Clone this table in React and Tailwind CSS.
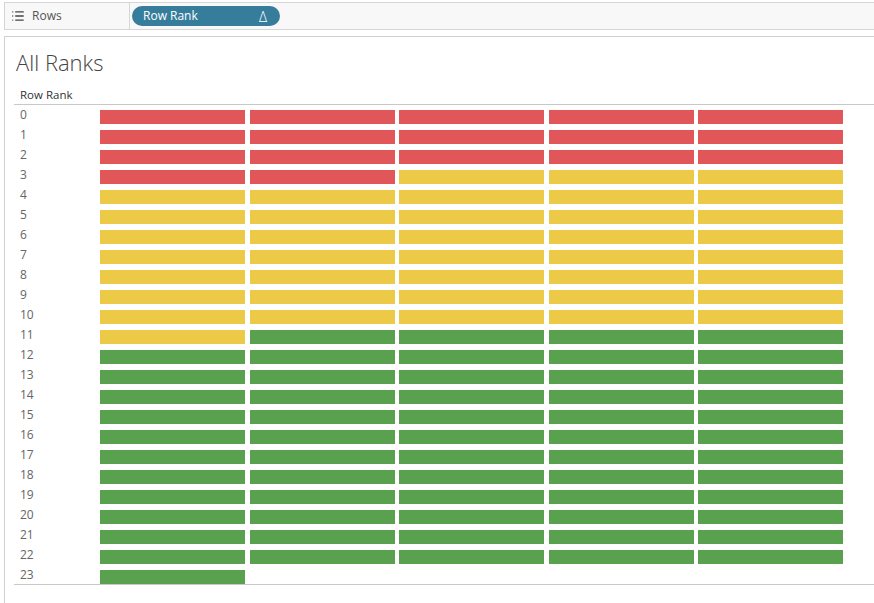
import { List } from 'lucide-react';

const COLS = 5;
const TOTAL = 116;

function barColor(i) {
  if (i < 17) return 'bg-[#e15759]';
  if (i < 56) return 'bg-[#edc948]';
  return 'bg-[#59a14f]';
}

const ROWS = Array.from({ length: Math.ceil(TOTAL / COLS) }, (_, r) =>
  Array.from({ length: COLS }, (_, c) => r * COLS + c).filter((i) => i < TOTAL)
);

export default function App() {
  return (
    <div
      className="flex h-[603px] w-[874px] flex-col overflow-hidden bg-white pl-[4px] pt-[2px]"
      style={{ fontFamily: '"Open Sans", "Liberation Sans", sans-serif' }}
    >
      {/* shelf */}
      <div className="flex h-[28px] shrink-0 border-y border-l border-[#d6d6d6] bg-[#f8f8f8]">
        <div className="flex w-[125px] items-center gap-[7px] border-r border-[#d6d6d6] pl-[6px] text-[12px] text-[#555]">
          <List size={14} strokeWidth={2.2} className="text-[#444]" />
          <span>Rows</span>
        </div>
        <div className="ml-[2px] mt-[3px] flex h-[20px] w-[148px] items-center justify-between rounded-full bg-[#367d9c] pl-[11px] pr-[13px] text-[12px] text-white">
          <span>Row Rank</span>
          <span className="text-[14px] font-light">Δ</span>
        </div>
      </div>

      {/* view */}
      <div className="mt-[6px] flex flex-1 flex-col border-l border-t border-[#d0d0d0]">
        <h1 className="ml-[11px] mt-[11px] text-[22px] font-light leading-[28px] text-[#444]">All Ranks</h1>

        <div className="ml-[9px] mt-[11px] border-b border-[#c8c8c8] pb-[1px] pl-[6px] text-[11.5px] font-medium leading-[16px] text-[#333]">
          Row Rank
        </div>

        <div className="ml-[9px] flex flex-col gap-[6px] border-b border-[#c8c8c8] pt-[5px]">
          {ROWS.map((row, r) => (
            <div key={r} className="flex h-[14px] items-center">
              <div className="w-[86px] pl-[6px] text-[12px] leading-[14px] text-[#666] -translate-y-[2px]">{r}</div>
              <div className="grid w-[743px] grid-cols-5 gap-x-[4.5px]">
                {row.map((i) => (
                  <div key={i} className={`h-[14px] ${barColor(i)}`} />
                ))}
              </div>
            </div>
          ))}
        </div>
      </div>
    </div>
  );
}
